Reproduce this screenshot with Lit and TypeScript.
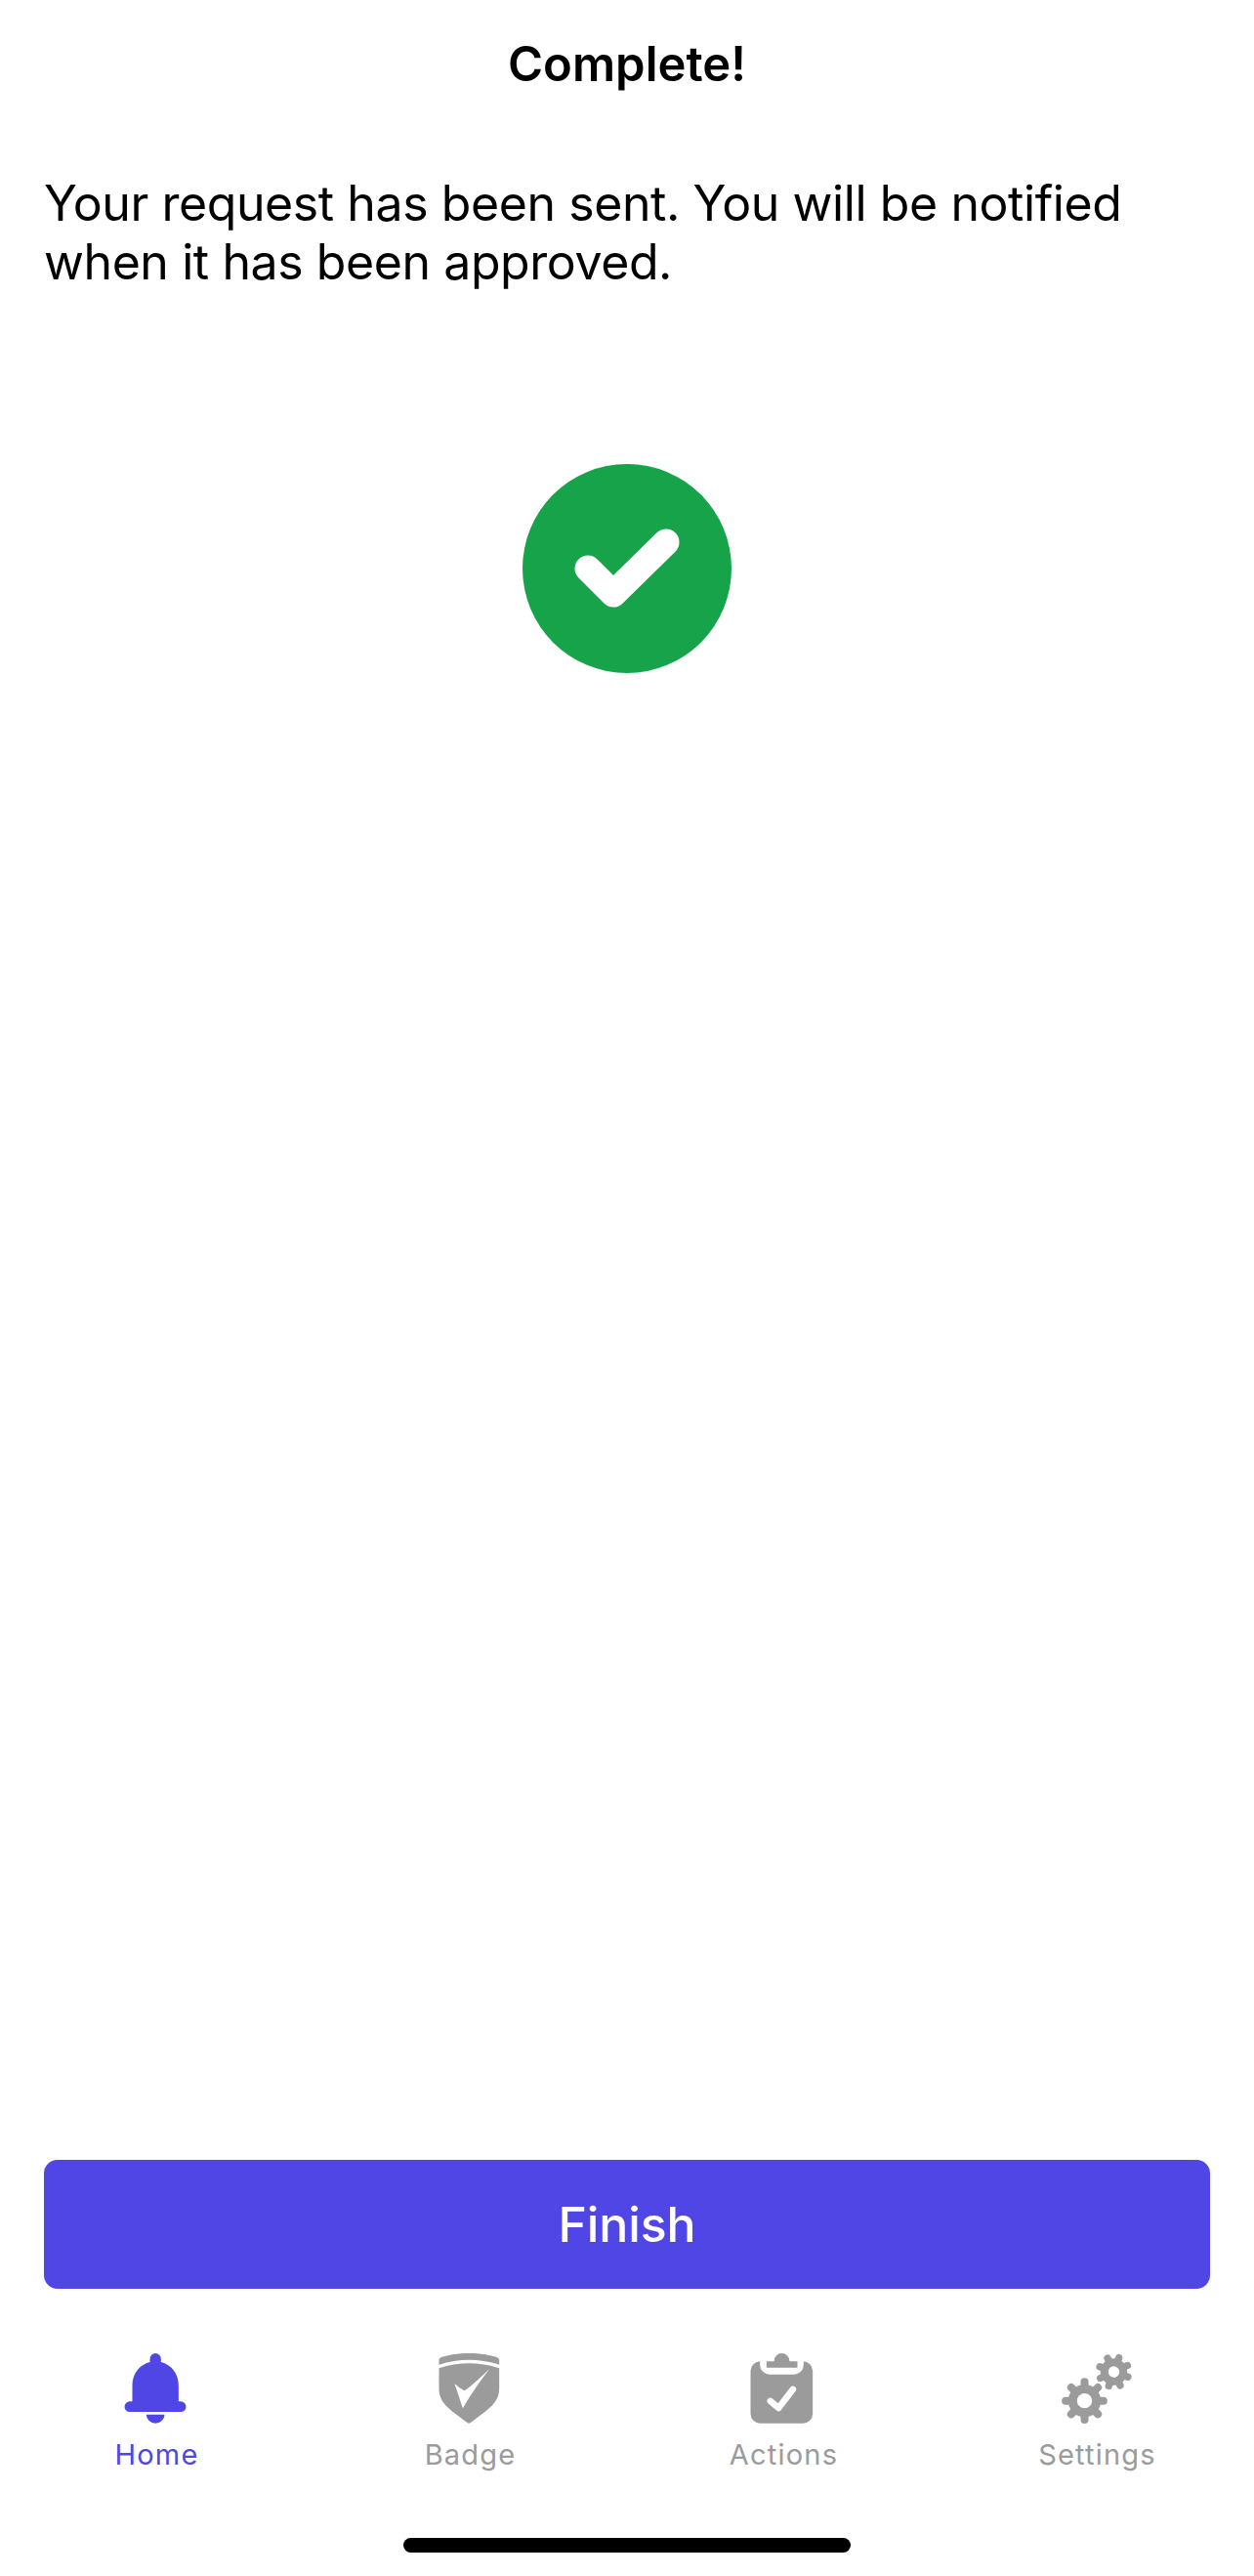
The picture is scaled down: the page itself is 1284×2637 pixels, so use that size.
import { LitElement, html, svg, css } from 'lit';
import { customElement } from 'lit/decorators.js';

const box = (c: number) => `${c - 144} 57 288 216`;

const gear = (cx: number, cy: number, body: number, tip: number, tooth: number, hole: number, rot: number) => svg`
  <g transform="rotate(${rot} ${cx} ${cy})">
    ${[0, 45, 90, 135, 180, 225, 270, 315].map(
      (a) => svg`<line x1=${cx} y1=${cy} x2=${cx} y2=${cy - tip} stroke-width=${tooth} stroke-linecap="round"
        stroke="currentColor" transform="rotate(${a} ${cx} ${cy})"></line>`,
    )}
    <circle cx=${cx} cy=${cy} r=${body} fill="currentColor"></circle>
    <circle cx=${cx} cy=${cy} r=${hole} fill="#fff"></circle>
  </g>`;

const bell = html`<svg viewBox=${box(181.5)} width="96" height="72" fill="currentColor">
  <path d="M176 57a17 17 0 0 1 17 17v10c32 8 54 36 54 71v50h7a16 16 0 0 1 0 32H97a16 16 0 0 1 0-32h8v-50c0-35 22-63 54-71V74a17 17 0 0 1 17-17Z"></path>
  <path d="M148 245h56a28 27 0 0 1-56 0Z"></path>
</svg>`;

const badge = html`<svg viewBox=${box(184.5)} width="96" height="72" fill="currentColor">
  <path d="M87 76q1-5 9-8 83-23 167 0 8 3 9 8v16q-93-30-185 0Z"></path>
  <path d="M87 103q92-30 185 0v62c0 45-32 63-88 105q-5 4-10 0c-56-42-87-60-87-105Z"></path>
  <path fill="#fff" d="M243 104c-28 26-53 51-78 68q-15-7-30-22l25 76c30-51 55-86 83-122Z"></path>
</svg>`;

const clipboard = html`<svg viewBox=${box(187.5)} width="96" height="72" fill="currentColor">
  <rect x="84" y="82" width="191" height="190" rx="30"></rect>
  <path fill="#fff" d="M113 80v12a30 30 0 0 0 30 30h74a30 30 0 0 0 30-30V80Z"></path>
  <path d="M133 101V82h23a24 25 0 0 1 48 0h24v19Z"></path>
  <path d="M145 204l25 21 44-57" fill="none" stroke="#fff" stroke-width="20" stroke-linecap="round" stroke-linejoin="round"></path>
</svg>`;

const gears = html`<svg viewBox=${box(190.5)} width="96" height="72">
  ${gear(150, 203, 50, 58, 24, 23, 0)}
  ${gear(240, 114, 41, 46, 22, 17, 20)}
</svg>`;

const tabs = [
  { label: 'Home', icon: bell, active: true },
  { label: 'Badge', icon: badge, active: false },
  { label: 'Actions', icon: clipboard, active: false },
  { label: 'Settings', icon: gears, active: false },
];

@customElement('app-root')
export class AppRoot extends LitElement {
  static styles = css`
    :host {
      display: flex;
      flex-direction: column;
      width: 1284px;
      height: 2637px;
      background: #fff;
      color: #000;
      font-family: Inter, 'Liberation Sans', sans-serif;
    }
    .title {
      margin: 0;
      padding-top: 36px;
      font-size: 49px;
      line-height: 60px;
      font-weight: 600;
      text-align: center;
    }
    .message {
      margin: 0;
      padding: 82px 45px 0;
      font-size: 50px;
      line-height: 60px;
      letter-spacing: -0.42px;
    }
    .check {
      display: block;
      margin: 177px auto 0;
    }
    .spacer {
      flex: 1;
    }
    .finish {
      display: block;
      margin: 0 45px;
      height: 132px;
      border: none;
      border-radius: 14px;
      background: #4f46e5;
      color: #fff;
      font: 500 50px Inter, 'Liberation Sans', sans-serif;
      letter-spacing: -0.1px;
    }
    .tabs {
      display: grid;
      grid-template-columns: repeat(4, 1fr);
      padding-top: 66px;
    }
    .tab {
      display: flex;
      flex-direction: column;
      align-items: center;
      gap: 14px;
      color: #9b9b9b;
      font-size: 29px;
      line-height: 36px;
      letter-spacing: 1.2px;
    }
    .tab.active {
      color: #4f46e5;
    }
    .indicator {
      width: 458px;
      height: 15px;
      margin: 67px auto 24px;
      border-radius: 8px;
      background: #000;
    }
  `;

  render() {
    return html`
      <h1 class="title">Complete!</h1>
      <p class="message">Your request has been sent. You will be notified when it has been approved.</p>
      <svg class="check" width="214" height="214" viewBox="0 0 214 214">
        <circle cx="107" cy="107" r="107" fill="#16a34a"></circle>
        <path d="M67 107l26 26 54-53" fill="none" stroke="#fff" stroke-width="27" stroke-linecap="round" stroke-linejoin="round"></path>
      </svg>
      <div class="spacer"></div>
      <button class="finish">Finish</button>
      <nav class="tabs">
        ${tabs.map(
          (t) => html`<div class="tab ${t.active ? 'active' : ''}">${t.icon}<span>${t.label}</span></div>`,
        )}
      </nav>
      <div class="indicator"></div>
    `;
  }
}
